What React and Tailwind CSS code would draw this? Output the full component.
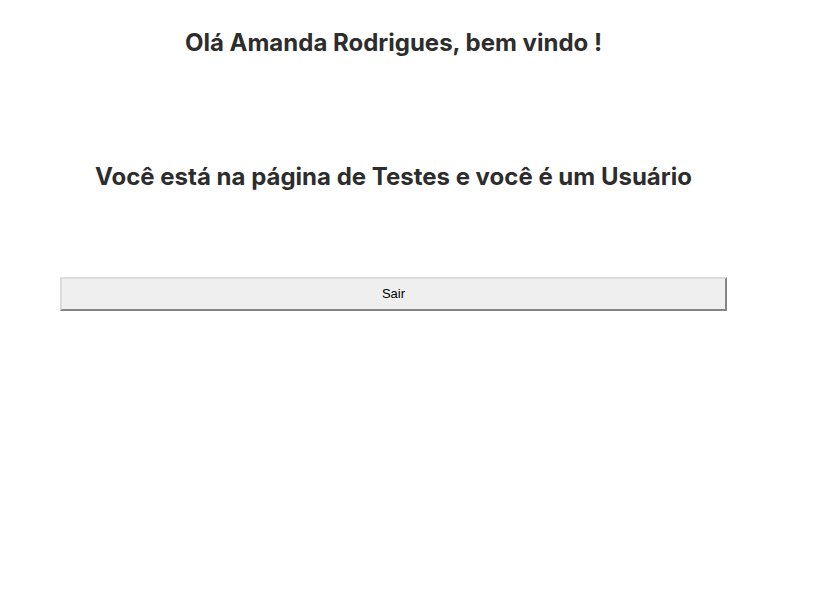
import React from 'react'

const App = () => {
    return (
        <div className="min-h-[606px] bg-white" style={{ fontFamily: 'Inter, sans-serif' }}>
            <div className="ml-[60px] w-[667px] text-center text-[#2d2d2d]">
                <h1 className="pt-[27px] text-[24px] font-bold leading-[32px]">Olá Amanda Rodrigues, bem vindo !</h1>
                <h2 className="mt-[102px] text-[24px] font-bold leading-[32px]">Você está na página de Testes e você é um Usuário</h2>
                <button
                    className="mt-[84px] h-[34px] w-full border-2 border-solid border-t-[#dcdcdc] border-l-[#dcdcdc] border-b-[#858585] border-r-[#858585] bg-[#efefef] text-[13px] text-black"
                    style={{ fontFamily: '"Liberation Sans", Arial, sans-serif' }}
                >
                    Sair
                </button>
            </div>
        </div>
    )
}

export default App
